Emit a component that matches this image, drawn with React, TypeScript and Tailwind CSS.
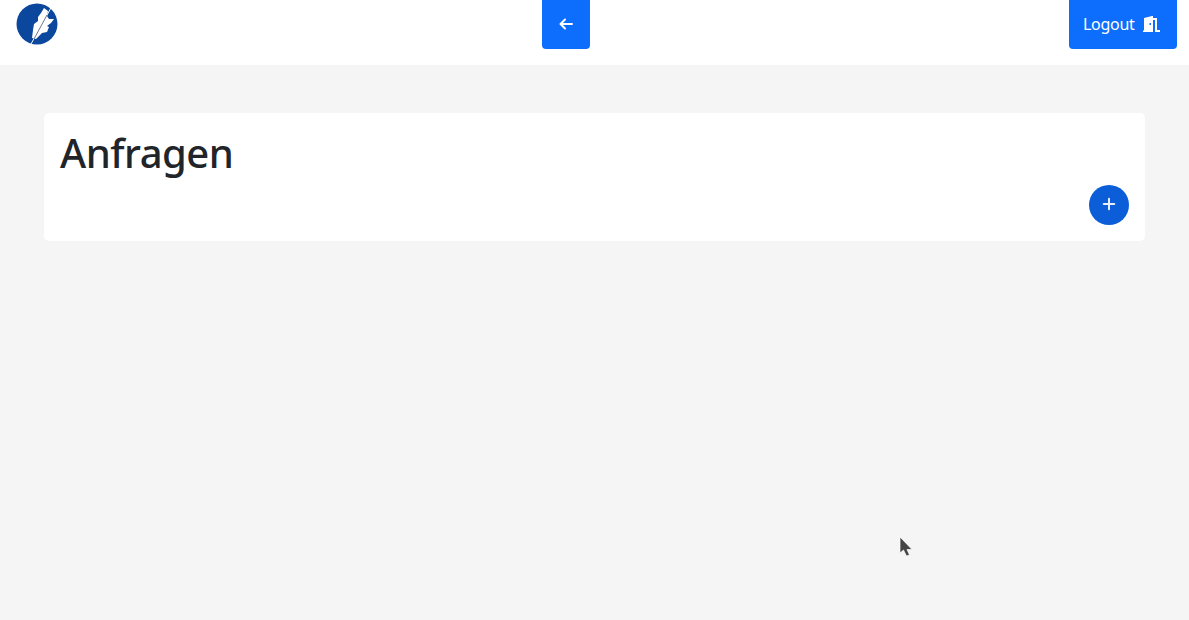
import { BsPlusLg } from "react-icons/bs";

function Logo() {
  return (
    <svg width="42" height="42" viewBox="0 0 42 42" className="block">
      <circle cx="21" cy="21" r="20.5" fill="#0b479c" />
      <path d="M25 10 L28 5 L32 8 L31 13 L33 16 L38 16 L35 20 L31 23 L33 24 L31 29 L26 30 L20 36 L16 35 L17 27 L18 21 L22 18 L22 14 Z" fill="#ffffff" />
      <path d="M15 41 L36 3" stroke="#ffffff" strokeWidth="1" fill="none" />
      <path d="M18 36 L31 12" stroke="#6b7a90" strokeWidth="1" fill="none" />
    </svg>
  );
}

function DoorIcon() {
  return (
    <svg width="17" height="16" viewBox="0 0 17 16" className="block" fill="#ffffff">
      <path d="M0 16 L0 14.5 L1 14.5 L1 2 L9 0 L10 0 L10 16 Z" />
      <path d="M10 2 L14 2 L14 14 L17 14 L17 16 L12 16 L12 4 L10 4 Z" />
      <rect x="6.5" y="7" width="1.5" height="2" fill="#0d6efd" />
    </svg>
  );
}

function ArrowIcon() {
  return (
    <svg width="16" height="16" viewBox="0 0 16 16" className="block" fill="none" stroke="#ffffff" strokeWidth="2" strokeLinecap="round" strokeLinejoin="round">
      <path d="M14 8 L3 8 M7 3.5 L2.5 8 L7 12.5" />
    </svg>
  );
}

export default function App() {
  return (
    <div className="min-h-screen bg-[#f5f5f5] font-['Noto_Sans',sans-serif]">
      <nav className="h-[65px] bg-white flex justify-between items-start pl-4 pr-3">
        <div className="w-[47px] pt-[3px]">
          <Logo />
        </div>
        <button className="w-12 h-[49px] rounded-b bg-[#0d6efd] text-white flex items-center justify-center pb-px pr-px">
          <ArrowIcon />
        </button>
        <button className="w-[108px] h-[49px] rounded-b bg-[#0d6efd] text-white flex items-center gap-[9px] pl-[14px] pb-0.5 text-base tracking-[-0.3px]">
          Logout
          <DoorIcon />
        </button>
      </nav>

      <main className="pt-12 px-11">
        <section className="bg-white rounded-[5px] p-4 h-[128px] flex flex-col">
          <h1 className="text-[40px] leading-12 font-medium tracking-[-0.5px] text-[#212529]">Anfragen</h1>
          <div className="flex justify-end mt-2">
            <button className="w-10 h-10 rounded-full bg-[#0b5ed7] text-white flex items-center justify-center pb-0.5">
              <BsPlusLg className="w-4 h-4 stroke-[0.8px]" />
            </button>
          </div>
        </section>
      </main>

      {/* mouse pointer caught in the screenshot */}
      <svg width="14" height="22" viewBox="0 0 14 22" className="absolute left-[899px] top-[536px]">
        <path d="M1 1 L1 17 L4.5 14 L7.5 20 L10.5 19 L8 13.5 L13 13.5 Z" fill="#444444" stroke="#ffffff" strokeWidth="0.7" />
      </svg>
    </div>
  );
}
